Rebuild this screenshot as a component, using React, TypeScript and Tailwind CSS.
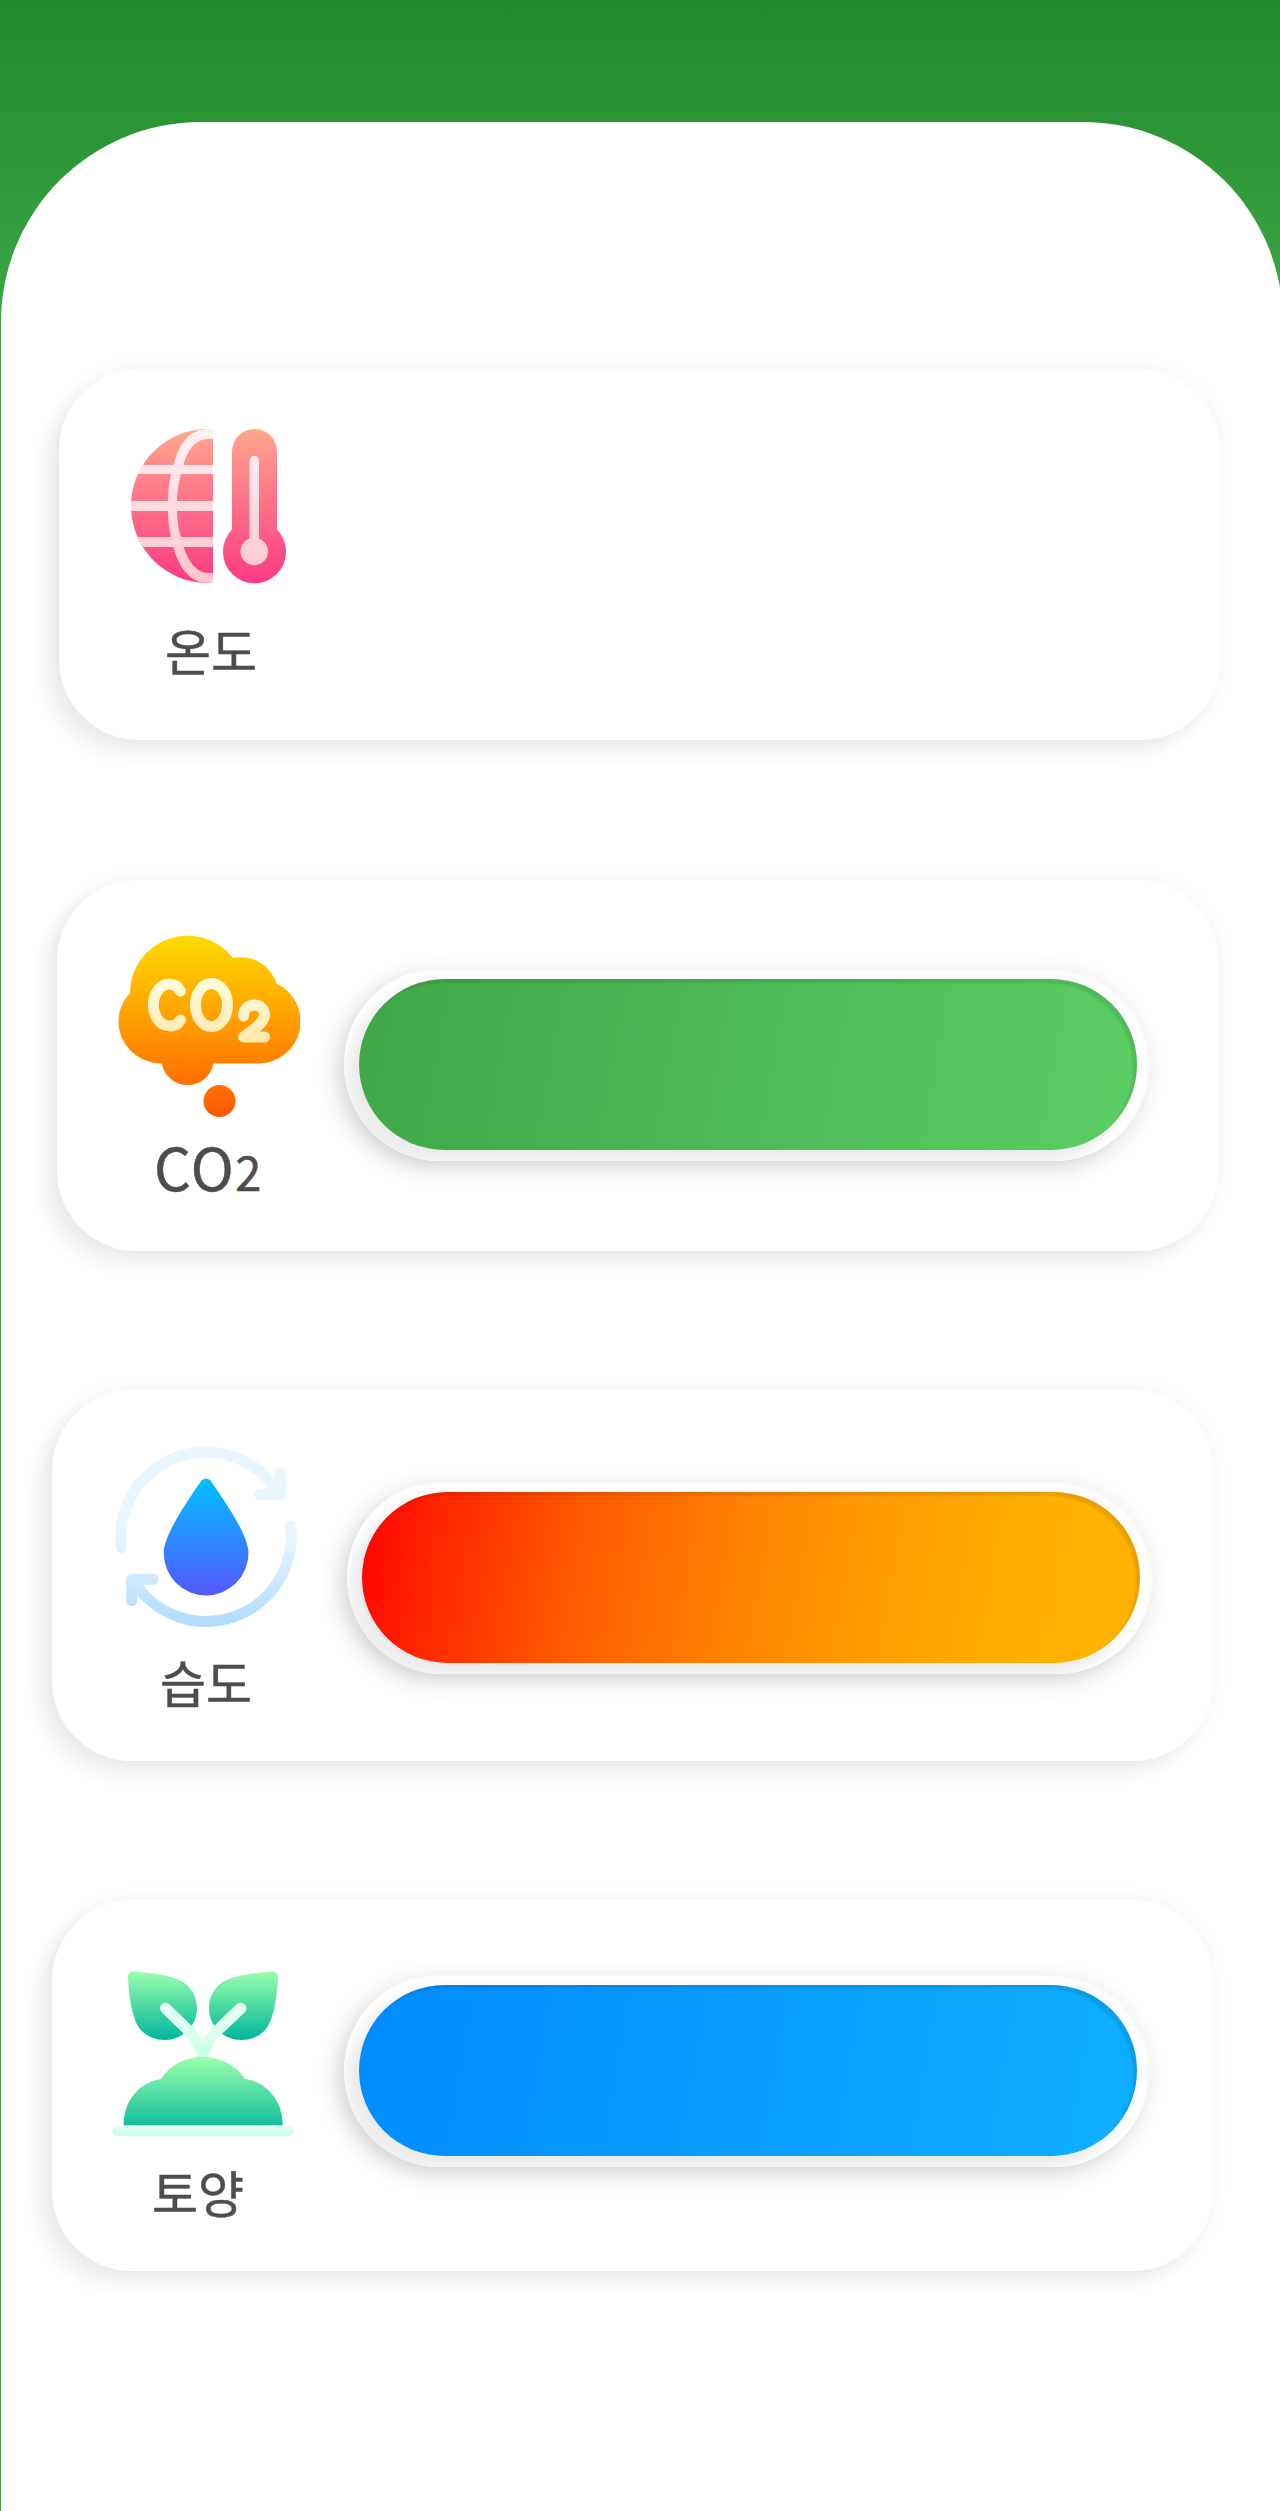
import React from "react";

function TemperatureIcon() {
  return (
    <svg viewBox="0 0 200 200" className="h-[200px] w-[200px]" fill="none">
      <defs>
        <linearGradient id="t1" gradientUnits="userSpaceOnUse" x1="0" y1="19" x2="0" y2="173"><stop stopColor="#ffa68d" /><stop offset="1" stopColor="#fd3a84" /></linearGradient>
        <linearGradient id="t2" gradientUnits="userSpaceOnUse" x1="0" y1="19" x2="0" y2="173"><stop stopColor="#fff1f3" /><stop offset="1" stopColor="#ffc4cd" /></linearGradient>
        <clipPath id="globe"><path d="M103 23Q103 19 98 19A77 77 0 0 0 98 173Q103 173 103 168Z" /></clipPath>
      </defs>
      <path d="M103 23Q103 19 98 19A77 77 0 0 0 98 173Q103 173 103 168Z" fill="url(#t1)" />
      <g clipPath="url(#globe)">
        <path fillRule="evenodd" fill="url(#t2)" d="M15 55H63.5C68.5 34 79.5 19 98 19H103V29H98C86 29 77.5 40 73.5 55H103V64H71C68.5 73 67.3 82 67 91H103V101H67C67.3 111 68.5 119 71 127H103V137H73.5C79.5 154 88 163 98 163H103V173H98C80 173 68.5 157 63.5 137H15V127H61C59 119 58 110 58 101H15V91H58C58 82 59 73 61 64H15Z" />
      </g>
      <path fill="url(#t1)" d="M144.500 19A22.500 22.500 0 0 1 167 41.500V119.500A31.600 31.600 0 1 1 122 119.500V41.500A22.500 22.500 0 0 1 144.500 19Z" />
      <path fill="url(#t2)" d="M139.500 50.500A4.700 4.700 0 0 1 149 50.500V128.500A13.800 13.800 0 1 1 139.500 128.500Z" />
    </svg>
  );
}

function CarbonIcon() {
  return (
    <svg viewBox="0 0 200 200" className="h-[200px] w-[200px]" fill="none">
      <defs>
        <linearGradient id="c1" gradientUnits="userSpaceOnUse" x1="0" y1="16" x2="0" y2="197"><stop stopColor="#ffda00" /><stop offset="1" stopColor="#ff5900" /></linearGradient>
        <linearGradient id="c2" gradientUnits="userSpaceOnUse" x1="0" y1="58" x2="0" y2="123"><stop stopColor="#fffce2" /><stop offset="1" stopColor="#ffe9a9" /></linearGradient>
      </defs>
      <path fill="url(#c1)" d="M30 73A57.500 57.500 0 0 1 133 38C153 34 170 45 176.500 63.500A42 42 0 0 1 159 143.500H113.500A26.300 26.300 0 0 1 61.800 143.500C37 143 18.500 124 18.500 101.500C18.500 89 24 80 30 73Z" />
      <circle cx="119.500" cy="181" r="16" fill="url(#c1)" />
      <g stroke="url(#c2)" strokeWidth="11" strokeLinecap="round" strokeLinejoin="round">
        <path d="M80.500 71C76 62 63 62 57.500 71C52 79 52 91 57.500 99C63 108 76 108 80.500 100" />
        <ellipse cx="111.500" cy="85" rx="16" ry="21.500" />
        <path d="M143.500 96C143.500 81.500 164.500 81.500 164.500 95C164.500 101 158 107 143.500 117H164.500" />
      </g>
    </svg>
  );
}

function HumidityIcon() {
  return (
    <svg viewBox="0 0 200 200" className="h-[200px] w-[200px]" fill="none">
      <defs>
        <linearGradient id="h1" gradientUnits="userSpaceOnUse" x1="0" y1="49" x2="0" y2="165"><stop stopColor="#00c0ff" /><stop offset="1" stopColor="#5558ff" /></linearGradient>
        <linearGradient id="h2" gradientUnits="userSpaceOnUse" x1="0" y1="16" x2="0" y2="197"><stop offset=".5" stopColor="#e9f5ff" /><stop offset="1" stopColor="#aedbff" /></linearGradient>
      </defs>
      <path fill="url(#h1)" d="M101.500 50.500C104 48.300 108 48.300 110.500 50.500C124 70 148.500 105 148.500 123A42.400 42.400 0 0 1 63.700 123C63.700 105 88 70 101.500 50.500Z" />
      <path stroke="url(#h2)" strokeWidth="11" strokeLinecap="round" strokeLinejoin="round" d="M21.500 117.300A85 85 0 0 1 176.300 59.500M180.300 43.500V64.300H159.500M190.500 96.500A85 85 0 0 1 36 154.500M31.700 170.500V149.300H53" />
    </svg>
  );
}

function SoilIcon() {
  return (
    <svg viewBox="0 0 200 200" className="h-[200px] w-[200px]" fill="none">
      <defs>
        <linearGradient id="s1" gradientUnits="userSpaceOnUse" x1="0" y1="21" x2="0" y2="90"><stop stopColor="#9bffad" /><stop offset="1" stopColor="#00b59c" /></linearGradient>
        <linearGradient id="s2" gradientUnits="userSpaceOnUse" x1="0" y1="107" x2="0" y2="180"><stop stopColor="#9bffad" /><stop offset="1" stopColor="#0bb99c" /></linearGradient>
        <linearGradient id="s3" gradientUnits="userSpaceOnUse" x1="0" y1="53" x2="0" y2="107"><stop stopColor="#eafff5" /><stop offset="1" stopColor="#ccffe7" /></linearGradient>
        <linearGradient id="s4" gradientUnits="userSpaceOnUse" x1="0" y1="175" x2="0" y2="186"><stop stopColor="#eafff5" /><stop offset="1" stopColor="#c5ffe8" /></linearGradient>
      </defs>
      <path fill="url(#s1)" d="M28 27Q28 21 34 21.500C53 23 76 26 86 34C94 41 97 49 97 59C97 76 82 90 65 90C55 90 46 86 40 79C31 67 29 43 28 27Z" />
      <path fill="url(#s1)" d="M178 27Q178 21 172 21.500C153 23 130 26 120 34C112 41 109 49 109 59C109 76 124 90 141 90C151 90 160 86 166 79C175 67 177 43 178 27Z" />
      <path fill="url(#s3)" d="M97.500 108C95 98 90 89 82 82L61.500 62C57 56 64 50 69 54L89 73C95 79 100 86 103 92C106 85 111 79 117 73L137 54C143 50 149 56 145 62L124 82C115 89 110 98 109 108Z" />
      <path fill="url(#s2)" d="M61 129C79 99.500 127 99.500 145 129C167 132 183 151 182.700 175.500H23.700C23 152 39 132 61 129Z" />
      <rect x="12.500" y="175.500" width="181" height="10.500" rx="5.200" fill="url(#s4)" />
    </svg>
  );
}

function Gauge({ place, fill }: { place: string; fill: string }) {
  return (
    <div className={"h-[193px] w-[806px] shrink-0 rounded-full shadow-[-6px_7px_22px_rgba(0,0,0,0.18)] " + place}>
      <div className="h-[193px] w-[806px] overflow-hidden rounded-full bg-white pt-[11px] pl-[15px] shadow-[inset_-2px_2px_1px_rgba(0,0,0,0.03)]">
        <div className="h-[171px] w-[778px] rounded-full shadow-[-16px_16px_16px_rgba(0,0,0,0.065),-1px_0px_18px_rgba(0,0,0,0.04)]">
          <div className={"h-[171px] w-[778px] rounded-full shadow-[inset_-4px_4px_2px_rgba(0,0,0,0.09)] " + fill} />
        </div>
      </div>
    </div>
  );
}

const card = "flex h-[371px] w-[1161px] shrink-0 rounded-[80px] bg-white shadow-[-14px_14px_16px_rgba(0,0,0,0.06),-1px_0px_20px_rgba(0,0,0,0.05)] ";
const label = "h-[60px] whitespace-nowrap font-['Noto_Sans_CJK_KR',sans-serif] leading-[60px] text-[#4d4d4d] [-webkit-text-stroke:0.5px_#4d4d4d] ";

export default function App() {
  return (
    <main className="h-[2511px] w-[1280px] overflow-hidden bg-linear-to-b from-[#1f8a2b] via-[#3ba444] via-[12%] to-[#3ba444] pt-[122px] pl-px">
      <div className="flex h-[2389px] w-[1282px] flex-col gap-[139px] rounded-t-[200px] bg-white pt-[247px]">
        <section className={card + "ml-[58px]"}>
          <div className="mt-[41px] ml-[51px]"><TemperatureIcon /><div className={label + "mt-[9px] ml-[55px] text-[50px]"}>온도</div></div>
        </section>
        <section className={card + "mt-px ml-[56px]"}>
          <div className="mt-[40px] ml-[43px] w-[200px]"><CarbonIcon /><div className={label + "mt-[16px] ml-[54px] text-[58px] tracking-[1.5px]"}>CO<span className="text-[47px]">2</span></div></div>
          <Gauge place="ml-[44px] mt-[88px]" fill="bg-linear-[100deg,#3fa747,#5bce64]" />
        </section>
        <section className={card + "ml-[51px]"}>
          <div className="mt-[40px] ml-[48px] w-[200px]"><HumidityIcon /><div className={label + "mt-[21px] ml-[60px] text-[50px]"}>습도</div></div>
          <Gauge place="ml-[47px] mt-[91px]" fill="bg-linear-[100deg,#ff0000,#ff2600_10%,#ff5a00_28%,#ff8400_49%,#ff9c00_65%,#ffb000_85%,#ffb400]" />
        </section>
        <section className={card + "ml-[51px]"}>
          <div className="mt-[50px] ml-[48px] w-[200px]"><SoilIcon /><div className={label + "mt-[11px] ml-[52px] text-[50px]"}>토양</div></div>
          <Gauge place="ml-[44px] mt-[74px]" fill="bg-linear-[100deg,#008cff,#0eafff]" />
        </section>
      </div>
    </main>
  );
}
